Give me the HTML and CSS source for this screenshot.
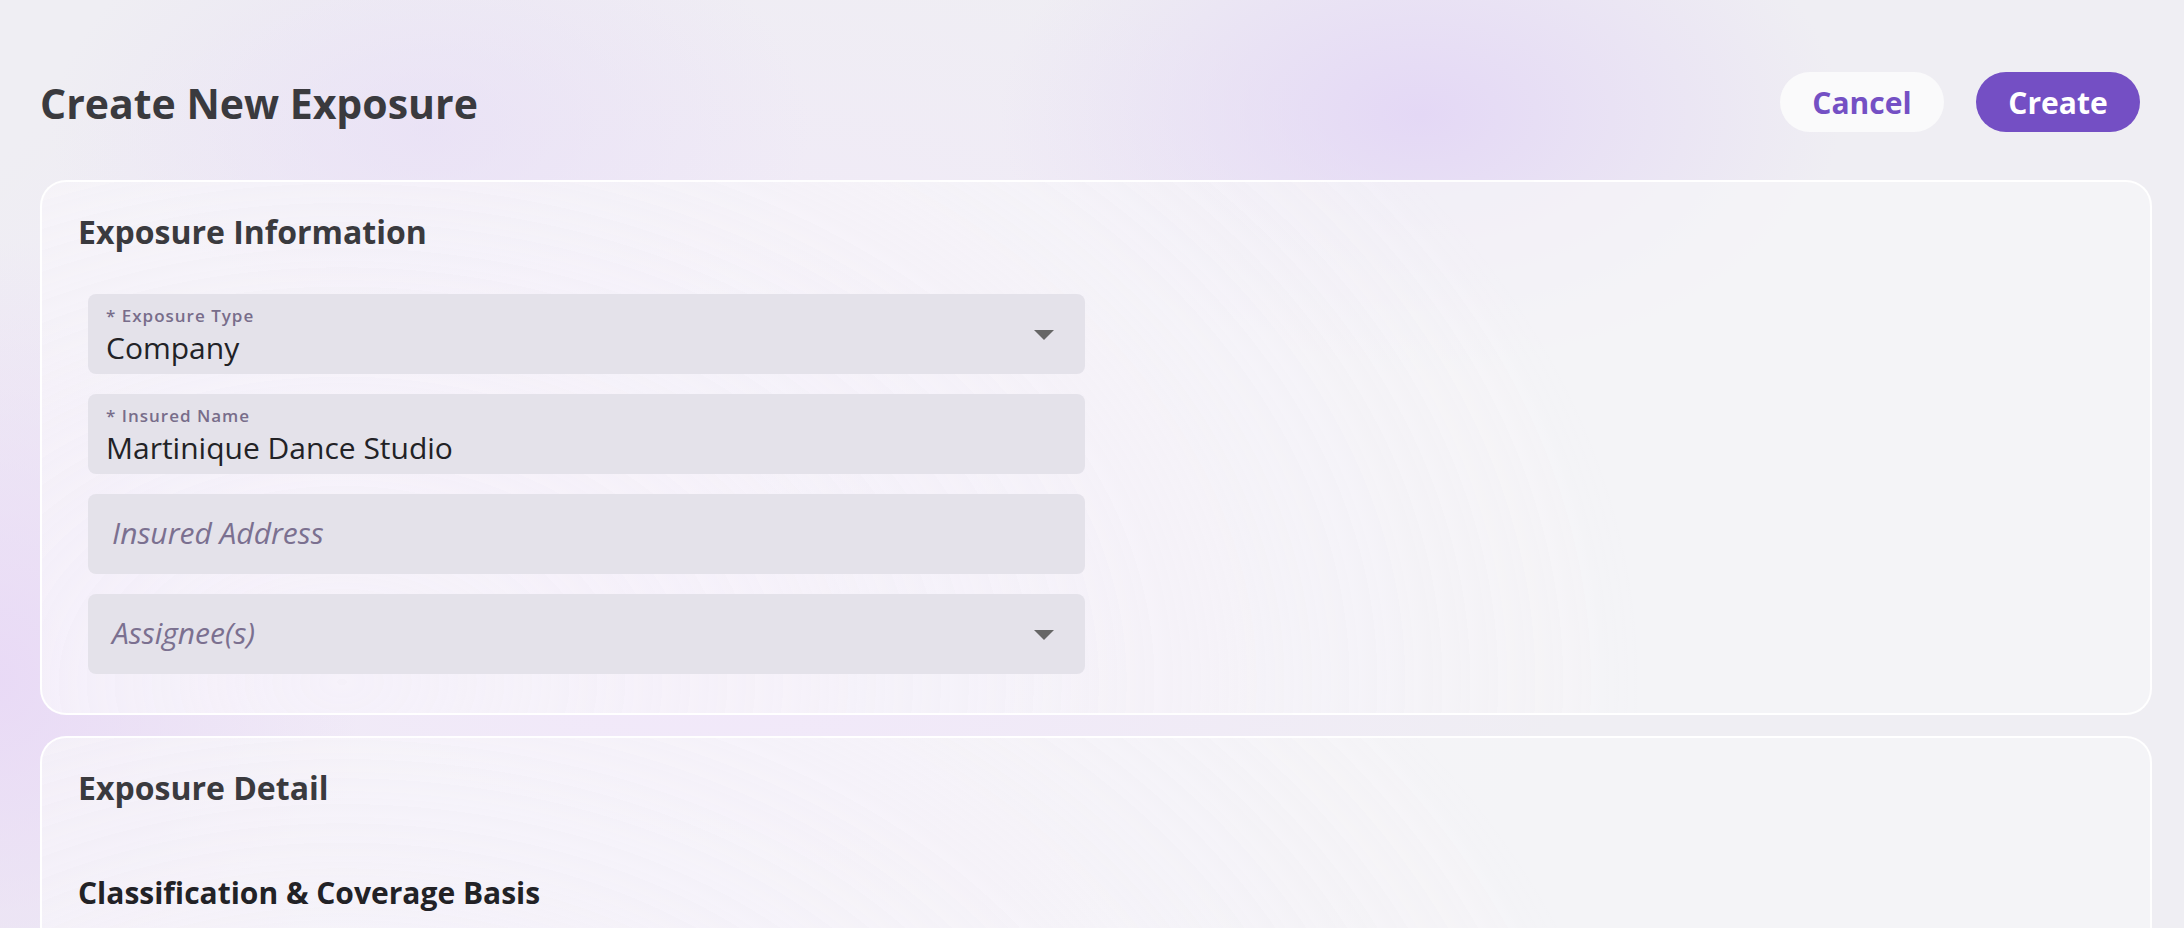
FILE: index.html
```html
<!DOCTYPE html>
<html lang="en">
<head>
<meta charset="utf-8">
<title>Create New Exposure</title>
<link rel="stylesheet" href="styles.css">
</head>
<body>
<div class="page">
  <header class="header">
    <h1 class="title">Create New Exposure</h1>
    <div class="actions">
      <button class="btn btn-secondary">Cancel</button>
      <button class="btn btn-primary">Create</button>
    </div>
  </header>

  <section class="card card-info">
    <h2 class="card-title">Exposure Information</h2>
    <div class="fields">
      <div class="field">
        <div class="field-body">
          <div class="field-label">* Exposure Type</div>
          <div class="field-value">Company</div>
        </div>
        <svg class="caret" width="20" height="10" viewBox="0 0 20 10"><path d="M0 0 L20 0 L10 10 Z" fill="#666"/></svg>
      </div>
      <div class="field">
        <div class="field-body">
          <div class="field-label">* Insured Name</div>
          <div class="field-value">Martinique Dance Studio</div>
        </div>
      </div>
      <div class="field">
        <div class="field-body field-body-empty">
          <div class="field-placeholder">Insured Address</div>
        </div>
      </div>
      <div class="field">
        <div class="field-body field-body-empty">
          <div class="field-placeholder">Assignee(s)</div>
        </div>
        <svg class="caret" width="20" height="10" viewBox="0 0 20 10"><path d="M0 0 L20 0 L10 10 Z" fill="#666"/></svg>
      </div>
    </div>
  </section>

  <section class="card card-detail">
    <h2 class="card-title">Exposure Detail</h2>
    <h3 class="sub-title">Classification &amp; Coverage Basis</h3>
  </section>
</div>
</body>
</html>
```

FILE: styles.css
```css
html, body {
  margin: 0;
  padding: 0;
  height: 100%;
}

body {
  font-family: "Open Sans", "Noto Sans", sans-serif;
  background-color: #efeef3;
  background-image:
    radial-gradient(ellipse 420px 260px at 1420px 115px, rgba(226, 212, 246, 0.85), rgba(226, 212, 246, 0) 100%),
    radial-gradient(ellipse 380px 240px at 430px 130px, rgba(230, 220, 246, 0.6), rgba(230, 220, 246, 0) 100%),
    radial-gradient(ellipse 360px 440px at 0px 680px, rgba(232, 216, 246, 0.9), rgba(232, 216, 246, 0) 100%),
    radial-gradient(ellipse 900px 650px at 700px 560px, rgba(242, 230, 252, 0.9), rgba(242, 230, 252, 0) 100%);
  overflow: hidden;
}

.page {
  padding: 0 32px 0 40px;
}

.header {
  display: flex;
  align-items: center;
  justify-content: space-between;
  padding: 72px 12px 48px 0;
}

.title {
  margin: 0;
  padding-top: 2px;
  font-size: 41px;
  line-height: 58px;
  font-weight: 700;
  color: #3a3a3e;
}

.actions {
  display: flex;
  gap: 32px;
}

.btn {
  width: 164px;
  height: 60px;
  border: none;
  border-radius: 30px;
  font-family: "Open Sans", "Noto Sans", sans-serif;
  font-size: 30px;
  font-weight: 700;
  padding: 0;
  cursor: pointer;
}

.btn-secondary {
  background: #fafafb;
  color: #7450c4;
}

.btn-primary {
  background: #744fc4;
  color: #ffffff;
}

.card {
  border: 2px solid rgba(255, 255, 255, 0.95);
  border-radius: 26px;
  background:
    radial-gradient(ellipse 1300px 900px at 300px 500px, rgba(246, 240, 252, 0.55), rgba(246, 240, 252, 0) 100%),
    rgba(246, 246, 248, 0.7);
  padding: 30px 36px 39px 36px;
}

.card-info {
  margin-bottom: 21px;
}

.card-title {
  margin: 0;
  font-size: 32px;
  line-height: 40px;
  font-weight: 700;
  color: #3a3a3e;
}

.fields {
  display: flex;
  flex-direction: column;
  gap: 20px;
  margin-top: 42px;
  padding-left: 10px;
}

.field {
  width: 997px;
  height: 80px;
  box-sizing: border-box;
  border-radius: 8px;
  background: #e4e2ea;
  display: flex;
  align-items: flex-start;
}

.field-body {
  flex: 1;
  padding: 12px 18px 0 18px;
}

.field-body-empty {
  padding: 21px 24px 0 24px;
}

.field-label {
  font-size: 17px;
  line-height: 20px;
  font-weight: 600;
  letter-spacing: 1px;
  color: #786d8a;
}

.field-value {
  margin-top: 4px;
  font-size: 30px;
  line-height: 36px;
  color: #222226;
}

.field-placeholder {
  font-size: 30px;
  line-height: 36px;
  font-style: italic;
  color: #7b7090;
}

.caret {
  flex: none;
  margin: 36px 31px 0 0;
}

.card-detail {
  padding-bottom: 80px;
}

.sub-title {
  margin: 67px 0 0 0;
  font-size: 30px;
  line-height: 36px;
  font-weight: 700;
  color: #222226;
}
```
